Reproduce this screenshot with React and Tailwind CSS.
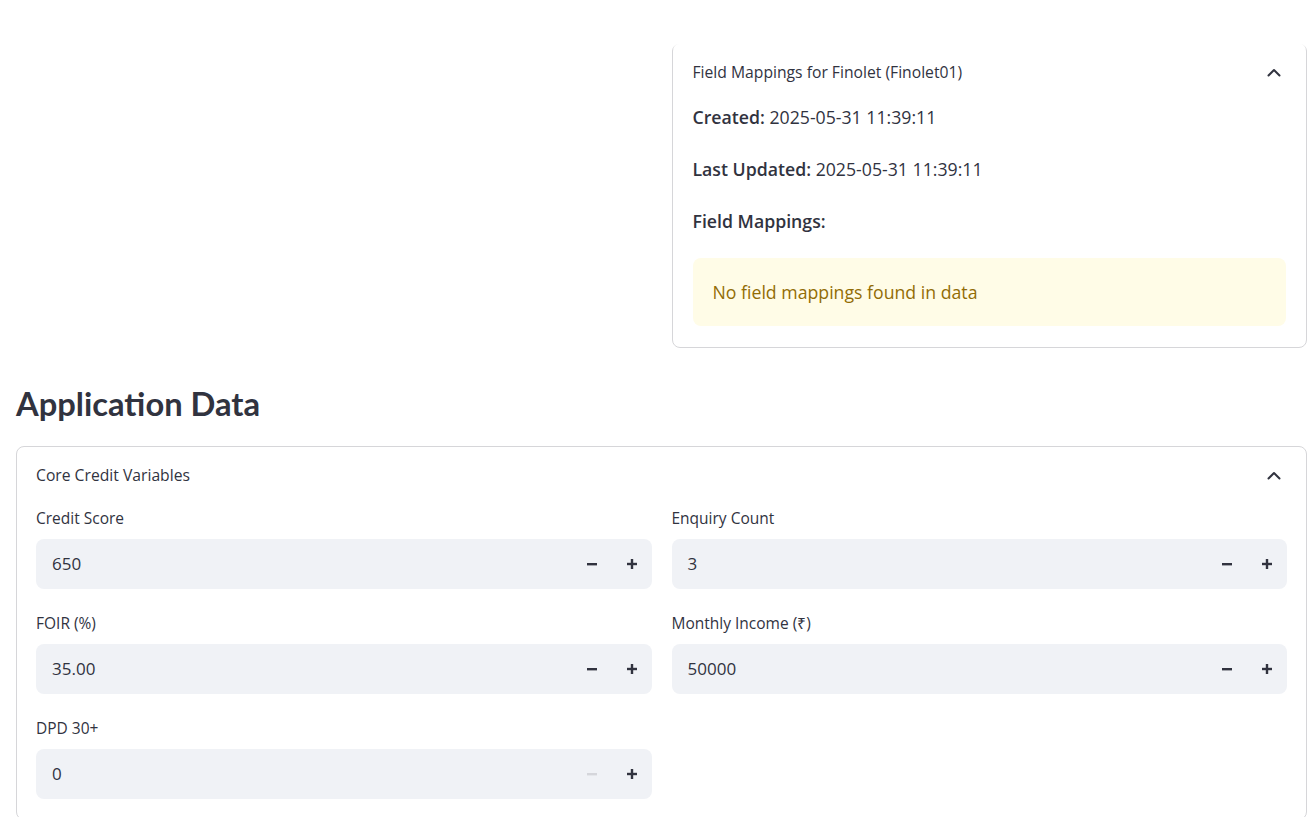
import React from "react";

function Chevron() {
  return (
    <svg width="16" height="16" viewBox="0 0 16 16" fill="none">
      <path d="M2.5 10.5 L8 5 L13.5 10.5" stroke="#31333F" strokeWidth="2" strokeLinecap="round" strokeLinejoin="round" />
    </svg>
  );
}

function Minus({ disabled }) {
  return (
    <svg width="12" height="12" viewBox="0 0 12 12">
      <rect x="1" y="5" width="10" height="2.4" fill={disabled ? "#d5d6db" : "#31333F"} />
    </svg>
  );
}

function Plus() {
  return (
    <svg width="12" height="12" viewBox="0 0 12 12">
      <rect x="1" y="4.8" width="10" height="2.4" fill="#31333F" />
      <rect x="4.8" y="1" width="2.4" height="10" fill="#31333F" />
    </svg>
  );
}

function NumberInput({ label, value, minusDisabled }) {
  return (
    <div className="flex flex-col">
      <div className="h-6 flex items-center text-[15.5px] text-[#31333F]">{label}</div>
      <div className="mt-2 h-[50px] rounded-lg bg-[#F0F2F6] flex items-center">
        <div className="flex-1 pl-4 text-[17px] text-[#31333F]">{value}</div>
        <div className="w-10 h-full flex items-center justify-center">
          <Minus disabled={minusDisabled} />
        </div>
        <div className="w-10 h-full flex items-center justify-center">
          <Plus />
        </div>
      </div>
    </div>
  );
}

export default function App() {
  return (
    <div className="relative w-full h-[817px] overflow-hidden bg-white text-[#31333F] font-['Open_Sans',sans-serif]">
      <div className="absolute top-0 left-0 right-0 h-[50px] z-10 bg-gradient-to-b from-white from-[88%] to-transparent" />
      <div className="pl-4 pr-2 pt-[43px]">
        <div className="grid grid-cols-2 gap-5">
          <div />
          <div className="border border-[#d6d6d9] rounded-lg">
            <div className="h-[58px] flex items-center justify-between pl-5 pr-6">
              <span className="text-[15.7px]">Field Mappings for Finolet (Finolet01)</span>
              <Chevron />
            </div>
            <div className="px-5 pt-[3px] pb-[21px]">
              <p className="text-[17.7px] leading-6"><b className="font-semibold">Created:</b> 2025-05-31 11:39:11</p>
              <p className="text-[17.7px] leading-6 mt-7"><b className="font-semibold">Last Updated:</b> 2025-05-31 11:39:11</p>
              <p className="text-[17.7px] leading-6 mt-7 font-semibold">Field Mappings:</p>
              <div className="mt-[25px] rounded-lg bg-[#FFFCE7] px-5 py-[22px] text-[17.7px] leading-6 text-[#926C05]">
                No field mappings found in data
              </div>
            </div>
          </div>
        </div>

        <h2 className="mt-8 h-12 flex items-center text-[32.7px] font-bold font-['Lato',sans-serif] text-[#31333F]">Application Data</h2>

        <div className="mt-[18px] border border-[#d6d6d9] rounded-lg">
          <div className="h-[58px] flex items-center justify-between pl-[19px] pr-6">
            <span className="text-[15.7px]">Core Credit Variables</span>
            <Chevron />
          </div>
          <div className="px-[19px] pt-[2px] pb-5">
            <div className="grid grid-cols-2 gap-x-5 gap-y-[23px]">
              <NumberInput label="Credit Score" value="650" />
              <NumberInput label="Enquiry Count" value="3" />
              <NumberInput label="FOIR (%)" value="35.00" />
              <NumberInput label="Monthly Income (₹)" value="50000" />
              <NumberInput label="DPD 30+" value="0" minusDisabled />
            </div>
          </div>
        </div>
      </div>
    </div>
  );
}
